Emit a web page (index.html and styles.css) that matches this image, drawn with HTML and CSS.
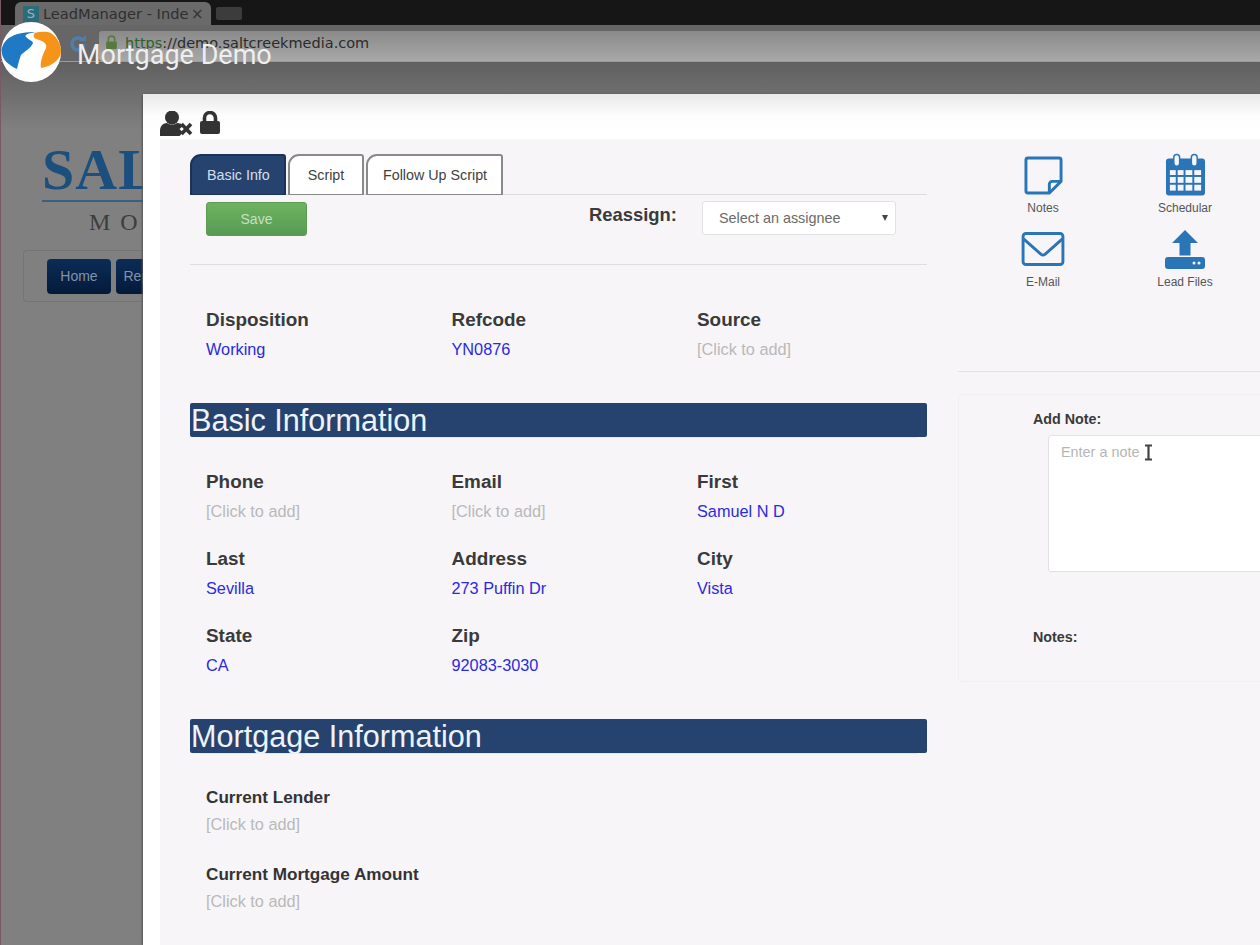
FILE: index.html
```html
<!DOCTYPE html>
<html lang="en">
<head>
<meta charset="utf-8">
<title>Mortgage Demo</title>
<link rel="stylesheet" href="styles.css">
</head>
<body>
<div class="stage">
  <header class="chrome">
    <div class="tabstrip">
      <div class="btab">
        <span class="favicon">S</span>
        <span class="btab-title">LeadManager - Inde</span>
        <span class="btab-x">×</span>
      </div>
      <div class="btab-new"></div>
    </div>
    <div class="toolbar">
      <svg class="reload" viewBox="0 0 20 20" width="20" height="20"><path d="M16 10a6 6 0 1 1-2-4.500" fill="none" stroke="#4f7fa8" stroke-width="3.500"/><path d="M11 7h7V1z" fill="#4f7fa8"/></svg>
      <div class="omnibox">
        <svg class="padlock" viewBox="0 0 12 14" width="13" height="15"><path d="M3 6V4a3 3 0 0 1 6 0v2" fill="none" stroke="#567a3c" stroke-width="1.500"/><rect x="1" y="6" width="10" height="7" rx="1" fill="#567a3c"/></svg>
        <span class="url"><span class="https">https</span>://demo.saltcreekmedia.com</span>
      </div>
    </div>
  </header>

  <div class="backdrop">
    <div class="brand">
      <div class="brand-name">SALT</div>
      <div class="brand-sub">M O</div>
    </div>
    <nav class="sitenav">
      <a class="navbtn">Home</a>
      <a class="navbtn">Reports</a>
    </nav>
  </div>

  <div class="video-title">
    <svg class="channel" viewBox="0 0 60 60" width="60" height="60">
      <circle cx="30" cy="30" r="30" fill="#fff"/>
      <path d="M0.500 28C3 15 15 10 35 10 27 11 23 13 25 15 28 18 32 19 32 21 30 26 24 29 20 33 18 38 17 43 16 47 7 43 0.500 37 0.500 28z" fill="#1f79c4"/>
      <path d="M34 11C42 9 47 10 50 11 57 16 60 23 60 29 60 37 52 44 40 46 39 41 41 34 45 26 47 21 40 18 35 17 32 15 32 13 34 11z" fill="#f59419"/>
    </svg>
    <span class="video-name">Mortgage Demo</span>
  </div>

  <section class="modal">
    <div class="modal-head">
      <svg class="mh-user" viewBox="0 0 33 26" width="33" height="26"><circle cx="12" cy="6.500" r="7" fill="#333"/><path d="M0 25v-5c0-5 3-8 7-8 3 2 7 2 10 0 3 0 5 1 6 3l-3.500 3 3.500 3.500-3.500 3.500z" fill="#333"/><path d="M21.500 13l9.500 10M31 13L21.500 23" stroke="#333" stroke-width="3.600"/></svg>
      <svg class="mh-lock" viewBox="0 0 20 23" width="20" height="23"><path d="M4.500 11V7a5.500 5.500 0 0 1 11 0v4" fill="none" stroke="#333" stroke-width="3.600"/><rect x="0" y="10" width="20" height="13" rx="2" fill="#333"/></svg>
    </div>
    <div class="modal-body">
      <div class="left">
        <div class="tabs">
          <a class="tab tab-active">Basic Info</a>
          <a class="tab">Script</a>
          <a class="tab">Follow Up Script</a>
        </div>
        <div class="actions">
          <button class="save">Save</button>
          <label class="reassign-label">Reassign:</label>
          <div class="select"><span>Select an assignee</span><i class="caret"></i></div>
        </div>

        <div class="grid grid-top">
          <div class="field"><h4>Disposition</h4><a class="val">Working</a></div>
          <div class="field"><h4>Refcode</h4><a class="val">YN0876</a></div>
          <div class="field"><h4>Source</h4><a class="val empty">[Click to add]</a></div>
        </div>

        <h2 class="band">Basic Information</h2>
        <div class="grid">
          <div class="field"><h4>Phone</h4><a class="val empty">[Click to add]</a></div>
          <div class="field"><h4>Email</h4><a class="val empty">[Click to add]</a></div>
          <div class="field"><h4>First</h4><a class="val">Samuel N D</a></div>
          <div class="field"><h4>Last</h4><a class="val">Sevilla</a></div>
          <div class="field"><h4>Address</h4><a class="val">273 Puffin Dr</a></div>
          <div class="field"><h4>City</h4><a class="val">Vista</a></div>
          <div class="field"><h4>State</h4><a class="val">CA</a></div>
          <div class="field"><h4>Zip</h4><a class="val">92083-3030</a></div>
        </div>

        <h2 class="band band-2">Mortgage Information</h2>
        <div class="stack">
          <div class="field"><h5>Current Lender</h5><a class="val empty">[Click to add]</a></div>
          <div class="field"><h5>Current Mortgage Amount</h5><a class="val empty">[Click to add]</a></div>
        </div>
      </div>

      <aside class="right">
        <div class="tools">
          <a class="tool">
            <span class="tool-ic"><svg viewBox="0 0 40 40" width="39" height="39"><path d="M4 2h32a2 2 0 0 1 2 2v22L26 38H4a2 2 0 0 1-2-2V4a2 2 0 0 1 2-2z" fill="none" stroke="#2a75b8" stroke-width="3"/><path d="M37 26h-8a3 3 0 0 0-3 3v8" fill="none" stroke="#2a75b8" stroke-width="3"/></svg></span>
            <span>Notes</span>
          </a>
          <a class="tool">
            <span class="tool-ic"><svg viewBox="0 0 42 44" width="41" height="44"><rect x="1" y="5" width="40" height="38" rx="3" fill="#2a75b8"/><g fill="#f7f5f8"><rect x="5" y="17" width="6" height="5"/><rect x="13" y="17" width="6" height="5"/><rect x="21" y="17" width="7" height="5"/><rect x="30" y="17" width="7" height="5"/><rect x="5" y="24" width="6" height="6"/><rect x="13" y="24" width="6" height="6"/><rect x="21" y="24" width="7" height="6"/><rect x="30" y="24" width="7" height="6"/><rect x="5" y="32" width="6" height="6"/><rect x="13" y="32" width="6" height="6"/><rect x="21" y="32" width="7" height="6"/><rect x="30" y="32" width="7" height="6"/></g><rect x="9" y="1" width="6" height="12" rx="3" fill="#f7f5f8" stroke="#2a75b8" stroke-width="1.500"/><rect x="27" y="1" width="6" height="12" rx="3" fill="#f7f5f8" stroke="#2a75b8" stroke-width="1.500"/></svg></span>
            <span>Schedular</span>
          </a>
          <a class="tool">
            <span class="tool-ic"><svg viewBox="0 0 44 36" width="44" height="35"><rect x="1.500" y="1.500" width="41" height="32" rx="3" fill="none" stroke="#2a75b8" stroke-width="3"/><path d="M2 7l18 16q2 1.500 4 0L42 7" fill="none" stroke="#2a75b8" stroke-width="3"/></svg></span>
            <span>E-Mail</span>
          </a>
          <a class="tool">
            <span class="tool-ic"><svg viewBox="0 0 40 39" width="40" height="39"><path d="M20 0l13 13h-7.500v12.500h-11V13H7z" fill="#2a75b8"/><rect x="0" y="27" width="40" height="12" rx="3" fill="#2a75b8"/><circle cx="29" cy="33" r="1.500" fill="#f7f5f8"/><circle cx="34" cy="33" r="1.500" fill="#f7f5f8"/></svg></span>
            <span>Lead Files</span>
          </a>
        </div>
        <div class="notes-card">
          <h6 class="note-label">Add Note:</h6>
          <div class="note-input">
            <span class="ph">Enter a note</span>
            <svg class="ibeam" viewBox="0 0 9 17" width="9" height="17"><path d="M1 1.500h7M1 15.500h7M4.500 1.500v14" fill="none" stroke="#444" stroke-width="2.200"/></svg>
          </div>
          <h6 class="notes-label">Notes:</h6>
        </div>
      </aside>
    </div>
  </section>
</div>
</body>
</html>
```

FILE: styles.css
```css
* { box-sizing: border-box; }
html, body { margin: 0; height: 100%; }
body { font-family: "Liberation Sans", Arial, sans-serif; background: #7f7f7f; }
h2, h4, h5, h6 { margin: 0; }

.stage { position: relative; width: 1260px; height: 945px; overflow: hidden; background: linear-gradient(#606060 62px, #6e6e6e 93px, #808080 130px); border-left: 1px solid #7a5a62; }

/* browser chrome */
.chrome { height: 62px; }
.tabstrip { height: 25px; background: #161616; display: flex; align-items: flex-end; padding-left: 14px; }
.btab { width: 196px; height: 23px; background: #6a6a6a; border-radius: 6px 6px 0 0; display: flex; align-items: center; gap: 4px; padding-left: 8px; color: #2f2f2f; font: 14.600px "DejaVu Sans", sans-serif; white-space: nowrap; }
.favicon { width: 16px; height: 16px; background: #2a6b7c; color: #9ab4bd; font-size: 13px; line-height: 16px; text-align: center; flex: none; }
.btab-title { width: 144px; white-space: nowrap; }
.btab-x { font-size: 15px; color: #333; }
.btab-new { width: 26px; height: 13px; margin: 0 0 5px 5px; background: #3c3c3c; border-radius: 2px; }
.toolbar { height: 37px; padding: 6px 0 1px 67px; background: #666; border-bottom: 1px solid #9c9c9c; display: flex; align-items: center; gap: 11px; }
.reload { flex: none; margin-top: -3px; }
.omnibox { flex: 1; height: 30px; padding: 0 0 6px 6px; background: linear-gradient(#8a8a8a, #a8a8a8); border-radius: 3px 0 0 3px; display: flex; align-items: center; gap: 7px; }
.url { font: 14.500px "DejaVu Sans", sans-serif; color: #2b2b2b; white-space: nowrap; }
.https { color: #2f5f2c; }

/* dimmed page behind the modal */
.backdrop { padding: 80px 0 0 22px; }
.brand { width: 120px; margin-left: 19px; }
.brand-name { font: bold 58px/56px "Liberation Serif", serif; color: #1d4f7e; white-space: nowrap; letter-spacing: 1px; }
.brand-sub { border-top: 2px solid #3a5f82; margin-top: 2px; padding: 7px 0 0 47px; font: 24px/26px "Liberation Serif", serif; color: #3d3d3d; white-space: nowrap; letter-spacing: 2px; }
.sitenav { margin-top: 15px; width: 140px; height: 52px; border: 1px solid #747474; border-radius: 4px; display: flex; gap: 5px; padding: 8px 0 0 23px; }
.navbtn { flex: none; width: 64px; height: 35px; background: linear-gradient(#0b2c57, #051a3a); border-radius: 4px; color: #8093a8; font-size: 14px; line-height: 35px; text-align: center; }

/* video overlay */
.video-title { position: absolute; left: 0; top: 22px; display: flex; align-items: center; gap: 16px; z-index: 2; }
.video-name { font: 27px Roboto, sans-serif; color: #eee; margin-top: 5px; }

/* modal */
.modal { position: absolute; left: 142px; top: 94px; width: 1118px; height: 851px; background: #fff; border-radius: 4px 0 0 0; box-shadow: -1px 0 2px #555; padding-left: 17px; z-index: 1; }
.modal-head { height: 45px; margin-left: -17px; padding: 17px 0 0 17px; background: linear-gradient(#e9e9e9, #fdfdfd 22px, #fff); display: flex; align-items: flex-start; gap: 7px; }
.modal-body { height: 806px; background: #f7f5f8; padding: 15px 0 0 30px; display: flex; overflow: hidden; }

.left { width: 737px; flex: none; }
.tabs { height: 41px; border-bottom: 1px solid #dcdcdc; display: flex; gap: 2px; }
.tab { height: 41px; padding: 0 15px; border: 2px solid #8a8a8a; border-bottom-width: 1px; border-radius: 11px 3px 0 0; background: #fff; color: #3f3f3f; font-size: 14.300px; line-height: 39px; white-space: nowrap; }
.tab:nth-child(2) { width: 76px; text-align: center; padding: 0; }
.tab:nth-child(3) { width: 137px; }
.tab-active { width: 96px; background: #26436f; border-color: #1c3358; color: #d5dfea; }

.actions { height: 70px; border-bottom: 1px solid #dedede; display: flex; align-items: flex-start; padding: 6px 0 0 16px; }
.save { width: 101px; height: 34px; margin-top: 1px; border: 1px solid #5f9a55; border-radius: 3px; background: linear-gradient(#6db35f, #589a55); color: #c9dfc4; font: 14px "Liberation Sans", sans-serif; padding: 0; }
.reassign-label { margin-left: 282px; font-size: 18.400px; font-weight: bold; color: #3a3a3a; line-height: 28px; }
.select { margin: 0 0 0 25px; width: 194px; height: 34px; background: #fff; border: 1px solid #e2e2e2; border-radius: 3px; display: flex; align-items: center; justify-content: space-between; padding: 0 7px 0 16px; color: #6a6a6a; font-size: 14.400px; }
.caret { width: 0; height: 0; border-left: 3px solid transparent; border-right: 3px solid transparent; border-top: 6px solid #444; }

.grid { display: grid; grid-template-columns: repeat(3, 245.500px); padding-left: 16px; row-gap: 22px; }
.grid-top { padding-top: 42px; height: 138px; }
.field h4 { font-size: 18.900px; line-height: 26px; font-weight: bold; color: #3a3a3a; }
.field h5 { font-size: 17.150px; line-height: 22px; font-weight: bold; color: #333; }
.val { display: block; font-size: 16.300px; line-height: 26px; color: #2a2ae0; margin-top: 3px; }
.val.empty { color: #b9b9b9; }

.band { height: 34px; background: #26436f; border-radius: 2px; color: #eef3fa; font-size: 30.600px; font-weight: normal; line-height: 34px; padding-left: 1px; box-shadow: 0 11px 0 -10px #e6e6e9; margin-bottom: 32px; }
.band-2 { margin-top: 41px; margin-bottom: 33px; }
.stack { padding-left: 16px; display: flex; flex-direction: column; gap: 26px; }

.right { flex: 1; min-width: 0; padding-left: 31px; }
.tools { width: 400px; height: 219px; margin-top: -1px; border-bottom: 1px solid #e4e3e6; display: grid; grid-template-columns: 142px 142px; grid-template-rows: 74px 74px; align-content: start; padding-left: 14px; }
.tool { display: flex; flex-direction: column; align-items: center; font-size: 12px; line-height: 14px; color: #555; gap: 4px; }
.tool-ic { height: 44px; display: flex; align-items: center; }

.notes-card { margin-top: 22px; height: 288px; border: 1px solid #f1eff2; border-right: 0; border-radius: 4px 0 0 4px; padding: 15px 0 0 74px; }
.note-label, .notes-label { font-size: 14.300px; line-height: 18px; font-weight: bold; color: #3a3a3a; }
.note-input { width: 300px; height: 137px; margin: 7px 0 0 15px; background: #fff; border: 1px solid #e2e2e2; border-radius: 3px; padding: 8px 0 0 12px; display: flex; align-items: flex-start; gap: 5px; color: #b5b5b5; font-size: 14.400px; line-height: 17px; }
.ibeam { flex: none; }
.notes-label { margin-top: 56px; }
```
